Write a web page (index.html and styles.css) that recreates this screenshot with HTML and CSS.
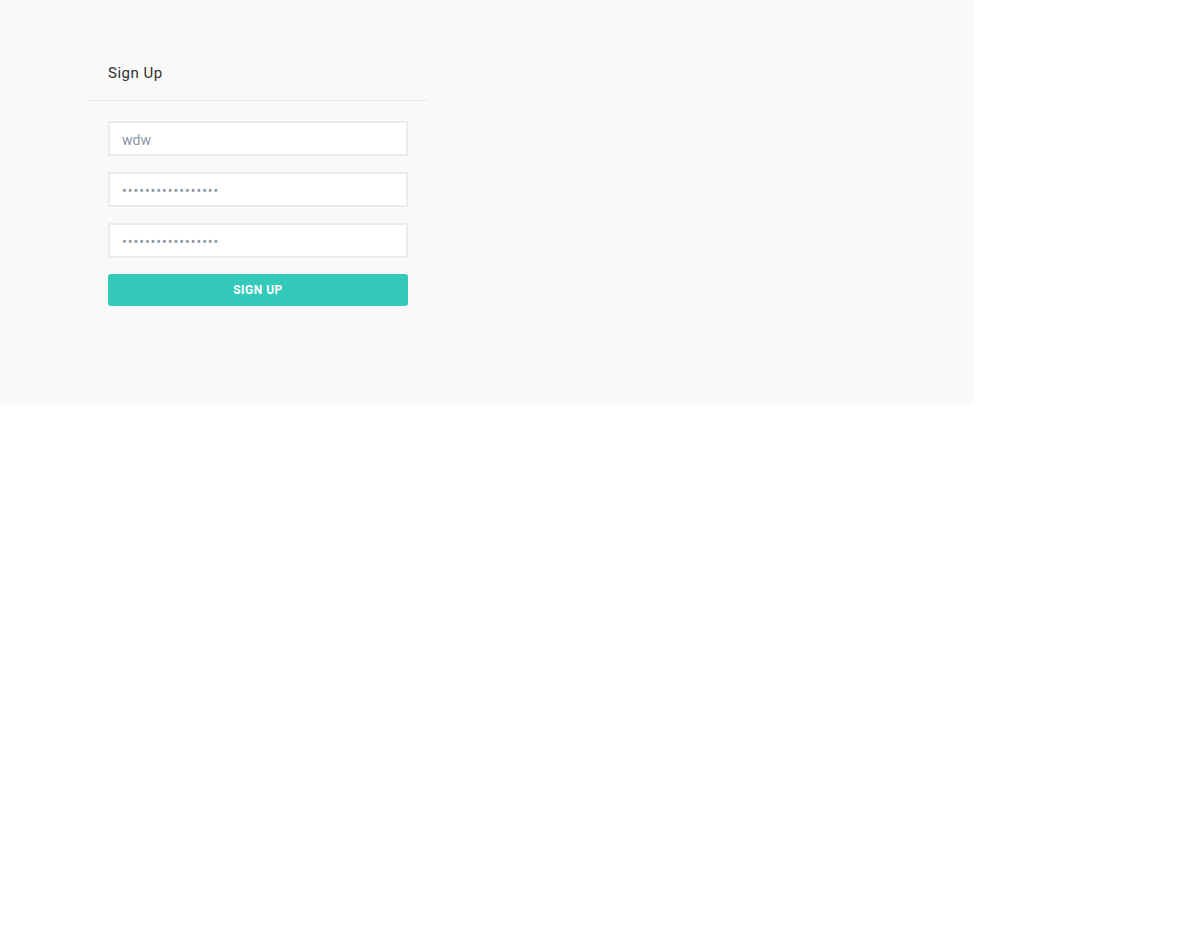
FILE: index.html
```html
<!DOCTYPE html>
<html lang="en">
<head>
    <meta charset="UTF-8">
    <meta name="viewport" content="width=device-width, initial-scale=1.0">
    <title>Sign Up</title>
    <link rel="stylesheet" href="styles.css">
</head>
<body>
    <div class="section">
        <div class="card">
            <h4 class="card-title">Sign Up</h4>
            <form class="card-body">
                <input type="text" class="form-control" placeholder="wdw">
                <input type="password" class="form-control" value="qwertyuiopasdfghj">
                <input type="password" class="form-control" value="qwertyuiopasdfghj">
                <button type="button" class="btn">Sign Up</button>
            </form>
        </div>
    </div>
</body>
</html>
```

FILE: styles.css
```css
body {
    margin: 0;
    padding: 0;
    font-family: Roboto, "Liberation Sans", sans-serif;
    background-color: #fff;
}
.section {
    width: 974px;
    height: 404px;
    background-color: #f9f9f9;
    padding: 48px 88px 0;
    box-sizing: border-box;
}
.card {
    width: 340px;
}
.card-title {
    margin: 0;
    padding: 16px 20px 18px;
    font-size: 15px;
    font-weight: 400;
    line-height: 18px;
    letter-spacing: 0.5px;
    color: #313131;
    border-bottom: 1px solid #ebebeb;
}
.card-body {
    display: flex;
    flex-direction: column;
    gap: 16px;
    padding: 20px;
}
.form-control {
    height: 35px;
    margin: 0;
    padding: 2px 12px 0;
    border: 2px solid #ebebeb;
    background-color: #fff;
    font-family: Roboto, "Liberation Sans", sans-serif;
    font-size: 14px;
    color: #8b95a5;
    outline: none;
    box-sizing: border-box;
}
.form-control[type="password"] {
    letter-spacing: 1px;
}
.form-control::placeholder {
    color: #8b95a5;
}
.btn {
    height: 32px;
    border: none;
    border-radius: 3px;
    background-color: #33cabb;
    color: #fff;
    font-family: Roboto, "Liberation Sans", sans-serif;
    font-size: 12px;
    font-weight: 700;
    text-transform: uppercase;
    letter-spacing: 0.5px;
    cursor: pointer;
}
```
